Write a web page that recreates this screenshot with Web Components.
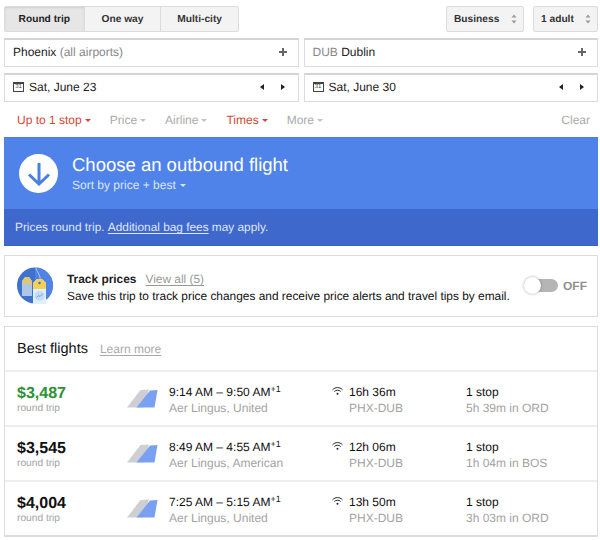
<!DOCTYPE html>
<html lang="en">
<head>
	<meta charset="utf-8">
	<title>Flights</title>
	<style>
html, body { margin: 0; padding: 0; background: #fff; }
body { font: 12px "Liberation Sans", Arial, sans-serif; color: #000; text-rendering: geometricPrecision; }
	</style>
	<script>
function Define( name, css, html )
{
	customElements.define( name, class extends HTMLElement
	{
		constructor()
		{
			super();
			const shadow = this.attachShadow( { mode: 'open' } );
			shadow.innerHTML = '<style>' + css + '</style>' + ( typeof html === 'function' ? html( this ) : html );
		}
	} );
}

const SPINNER = '<svg width="6" height="10" viewBox="0 0 6 10"><path d="M3 0.500 L5.500 3.500 H0.500 Z M0.500 6.500 H5.500 L3 9.500 Z" fill="#999"/></svg>';
const CARET = '<i></i>';

Define( 'gf-tabs',
	`:host { display: flex; height: 26px; box-sizing: border-box; border: 1px solid #dcdcdc; border-radius: 2px; background: #f3f3f3; font-weight: bold; font-size: 10.2px; color: #333; }
	span { display: flex; align-items: center; justify-content: center; box-sizing: border-box; border-right: 1px solid #dcdcdc; }
	span:last-child { border-right: 0; }
	.on { background: #e6e6e6; box-shadow: inset 0 1px 2px rgba( 0, 0, 0, 0.1 ); color: #222; }`,
	'<span class="on" style="width:80px">Round trip</span><span style="width:77px">One way</span><span style="width:77px">Multi-city</span>' );

Define( 'gf-select',
	`:host { display: flex; align-items: center; justify-content: space-between; height: 26px; box-sizing: border-box; border: 1px solid #dcdcdc; border-radius: 2px; background: #f3f3f3; font-weight: bold; font-size: 10.2px; color: #333; padding: 0 6px 0 7px; }`,
	'<slot></slot>' + SPINNER );

Define( 'gf-field',
	`:host { display: flex; align-items: center; justify-content: space-between; height: 29px; box-sizing: border-box; border: 1px solid #dcdcdc; border-top: 2px solid #d4d4d4; background: #fff; padding: 0 11px 3px 8px; font-size: 12px; color: #222; }
	svg { display: block; }`,
	'<span><slot></slot></span><svg width="8" height="8" viewBox="0 0 8 8"><path d="M3 0h2v3h3v2H5v3H3V5H0V3h3z" fill="#666"/></svg>' );

Define( 'gf-date',
	`:host { display: flex; align-items: center; height: 29px; box-sizing: border-box; border: 1px solid #dcdcdc; border-top: 2px solid #d4d4d4; background: #fff; padding: 0 13px 3px 8px; font-size: 12px; color: #222; }
	.cal { width: 11px; height: 10px; box-sizing: border-box; border: 1px solid #444; border-top-width: 2px; font-size: 6px; line-height: 7px; text-align: center; margin-right: 5px; color: #444; }
	.text { flex: 1; }
	svg { display: block; margin-left: 17px; }`,
	'<span class="cal">31</span><span class="text"><slot></slot></span>' +
	'<svg width="4" height="6" viewBox="0 0 4 6"><path d="M4 0V6L0 3Z" fill="#222"/></svg>' +
	'<svg width="4" height="6" viewBox="0 0 4 6"><path d="M0 0V6L4 3Z" fill="#222"/></svg>' );

Define( 'gf-filter',
	`:host { display: inline-flex; align-items: center; font-size: 12px; color: #aaa; }
	:host( [ active ] ) { color: #d14836; }
	i { display: block; width: 0; height: 0; margin-left: 3px; margin-top: 1px; border: 3px solid transparent; border-top: 3px solid currentColor; border-bottom: 0; }
	:host( :not( [ active ] ) ) i { border-top-color: #c4c4c4; }`,
	'<slot></slot>' + CARET );

Define( 'gf-filters',
	`:host { display: flex; align-items: center; height: 35px; padding: 0 8px 0 13px; gap: 19px; }
	.clear { margin-left: auto; color: #aaa; font-size: 12px; }`,
	'<slot></slot><span class="clear">Clear</span>' );

Define( 'gf-banner',
	`:host { display: block; background: #5083ea; color: #fff; border: 1px solid #4a7de6; border-width: 1px 0 0; }
	.top { display: flex; align-items: center; height: 71px; padding-left: 15px; box-sizing: border-box; }
	.circle { width: 39px; height: 39px; border-radius: 50%; background: #fff; display: flex; align-items: center; justify-content: center; margin-right: 14px; }
	h2 { margin: 0; font-weight: normal; font-size: 18.5px; line-height: 22px; }
	.sort { font-size: 12px; line-height: 15px; margin-top: 2px; color: #dbe6fb; display: flex; align-items: center; }
	.sort i { display: block; margin-left: 4px; border: 3px solid transparent; border-top-color: #dbe6fb; border-bottom: 0; }
	.bottom { height: 37px; box-sizing: border-box; background: #3f68cd; border-bottom: 1px solid #3561c8; padding-left: 11px; display: flex; align-items: center; font-size: 11.85px; color: #dfe7f8; white-space: pre; }
	u { text-underline-offset: 2px; }`,
	`<div class="top"><div class="circle"><svg width="24" height="24" viewBox="0 0 24 24"><path d="M12 1V22M2 12.500 12 22 22 12.500" fill="none" stroke="#4a7fe4" stroke-width="3"/></svg></div>
	<div><h2>Choose an outbound flight</h2><div class="sort">Sort by price + best<i></i></div></div></div>
	<div class="bottom">Prices round trip. <u>Additional bag fees</u> may apply.</div>` );

Define( 'gf-track',
	`:host { display: flex; align-items: center; height: 62px; box-sizing: border-box; border: 1px solid #dcdcdc; background: #fff; position: relative; padding-left: 12px; }
	svg { display: block; margin-right: 14px; flex: none; }
	.text { flex: 1; font-size: 11.9px; color: #111; line-height: 17px; padding-top: 4px; white-space: nowrap; }
	b { color: #222; }
	u { color: #999; margin-left: 9px; text-underline-offset: 2px; }
	.switch { position: relative; width: 33px; height: 13px; border-radius: 7px; background: #b5b5b5; margin-right: 5px; margin-top: -2px; }
	.knob { position: absolute; left: -1px; top: -2px; width: 17px; height: 17px; border-radius: 50%; background: #fff; box-shadow: 0 0 3px rgba( 0, 0, 0, 0.35 ); }
	.off { font-weight: bold; font-size: 12px; color: #8f8f8f; width: 34px; margin-top: -1px; }`,
	`<svg width="36" height="40" viewBox="0 0 36 40">
		<circle cx="18" cy="19.500" r="18" fill="#3f72cf"/>
		<path d="M18 1.500a18 18 0 0 1 0 36z" fill="#4f83e6"/>
		<path d="M19 1 C19 6 24 8 23 15" fill="none" stroke="#cfe0f5" stroke-width="0.8"/>
		<path d="M5 15l3-4h4l3 4v15H5z" fill="#d7e3ee" opacity="0.75"/>
		<path d="M5 15l3-4h4l3 4v3H5z" fill="#e8c765" opacity="0.85"/>
		<path d="M16 17l4-4h5l4 4v21H16z" fill="#dff0fb"/>
		<path d="M16 17l4-4h5l4 4v6H16z" fill="#f6cf55"/>
		<circle cx="22.500" cy="17" r="1.300" fill="#3f72cf"/>
		<circle cx="22.500" cy="30" r="5" fill="#c4dcf4"/>
		<path d="M19.500 31.500l2-2 1.500 1 3-3" fill="none" stroke="#5b8fe0" stroke-width="0.8"/>
	</svg>
	<div class="text"><div><b>Track prices</b><u>View all (5)</u></div><div>Save this trip to track price changes and receive price alerts and travel tips by email.</div></div>
	<div class="switch"><div class="knob"></div></div><div class="off">OFF</div>` );

Define( 'gf-flight',
	`:host { display: grid; grid-template-columns: 110px 42px 163px 134px 1fr; align-items: center; height: 55px; box-sizing: border-box; padding: 3px 0 0 12px; border-top: 2px solid #eee; font-size: 12px; color: #111; }
	.sub { color: #a3a3a3; font-size: 12px; line-height: 16px; }
	.main { line-height: 16px; }
	.price { font-weight: bold; font-size: 16px; line-height: 18px; }
	:host( [ best ] ) .price { color: #2e9135; }
	.rt { color: #a3a3a3; font-size: 10.2px; line-height: 12px; }
	sup { font-size: 9px; line-height: 0; vertical-align: 4px; }
	.dur { display: flex; align-items: flex-start; }
	.dur svg { display: block; margin: 3px 6px 0 0; flex: none; }
	svg { display: block; }
	.tail { align-self: start; margin-top: 14px; }`,
	( el ) => `<div><div class="price">${ el.getAttribute( 'price' ) }</div><div class="rt">round trip</div></div>
	<svg class="tail" width="31" height="19" viewBox="0 0 31 19"><path d="M0 18.500 13.500 1 22 .5 16 18.500Z" fill="#cdcfd2"/><path d="M9.500 18.500 23 1.500 30.500 1 27.500 18.500Z" fill="#7aa1f1"/></svg>
	<div><div class="main">${ el.getAttribute( 'times' ) }<sup>+1</sup></div><div class="sub">${ el.getAttribute( 'air' ) }</div></div>
	<div class="dur"><svg width="11" height="8" viewBox="0 0 11 8"><path d="M.5 2.800C3.500-.2 7.500-.2 10.500 2.800M2.300 4.500C4 2.800 7 2.800 8.700 4.500" fill="none" stroke="#222" stroke-width="1"/><circle cx="5.500" cy="6.800" r="1" fill="#222"/></svg><div><div class="main">${ el.getAttribute( 'dur' ) }</div><div class="sub">PHX-DUB</div></div></div>
	<div><div class="main">1 stop</div><div class="sub">${ el.getAttribute( 'lay' ) }</div></div>` );

Define( 'gf-best',
	`:host { display: block; border: 1px solid #dcdcdc; border-bottom-width: 2px; background: #fff; }
	header { display: flex; align-items: center; height: 43px; padding-left: 12px; }
	.t { font-size: 14.5px; color: #111; }
	u { font-size: 12px; color: #aaa; margin-left: 12px; text-underline-offset: 2px; }`,
	'<header><span class="t">Best flights</span><u>Learn more</u></header><slot></slot>' );

Define( 'gf-app',
	`:host { display: flex; flex-direction: column; padding: 6px 2px 0 4px; }
	.row { display: flex; gap: 5px; margin-bottom: 6px; }
	.row > * { flex: 1; }
	.head { display: flex; margin-bottom: 6px; }
	gf-tabs { width: 235px; }
	.grow { flex: 1; }
	.mb { margin-bottom: 9px; }`,
	`<div class="head"><gf-tabs></gf-tabs><span class="grow"></span><gf-select style="width:78px;margin-right:9px">Business</gf-select><gf-select style="width:65px">1 adult</gf-select></div>
	<div class="row"><gf-field>Phoenix <span style="color:#888">(all airports)</span></gf-field><gf-field><span style="color:#888">DUB</span> Dublin</gf-field></div>
	<div class="row" style="margin-bottom:0"><gf-date>Sat, June 23</gf-date><gf-date>Sat, June 30</gf-date></div>
	<gf-filters><gf-filter active>Up to 1 stop</gf-filter><gf-filter>Price</gf-filter><gf-filter>Airline</gf-filter><gf-filter active>Times</gf-filter><gf-filter>More</gf-filter></gf-filters>
	<gf-banner class="mb"></gf-banner>
	<gf-track class="mb"></gf-track>
	<gf-best>
		<gf-flight best price="$3,487" times="9:14 AM – 9:50 AM" air="Aer Lingus, United" dur="16h 36m" lay="5h 39m in ORD"></gf-flight>
		<gf-flight price="$3,545" times="8:49 AM – 4:55 AM" air="Aer Lingus, American" dur="12h 06m" lay="1h 04m in BOS"></gf-flight>
		<gf-flight price="$4,004" times="7:25 AM – 5:15 AM" air="Aer Lingus, United" dur="13h 50m" lay="3h 03m in ORD"></gf-flight>
	</gf-best>` );
	</script>
</head>
<body>
	<gf-app></gf-app>
</body>
</html>
